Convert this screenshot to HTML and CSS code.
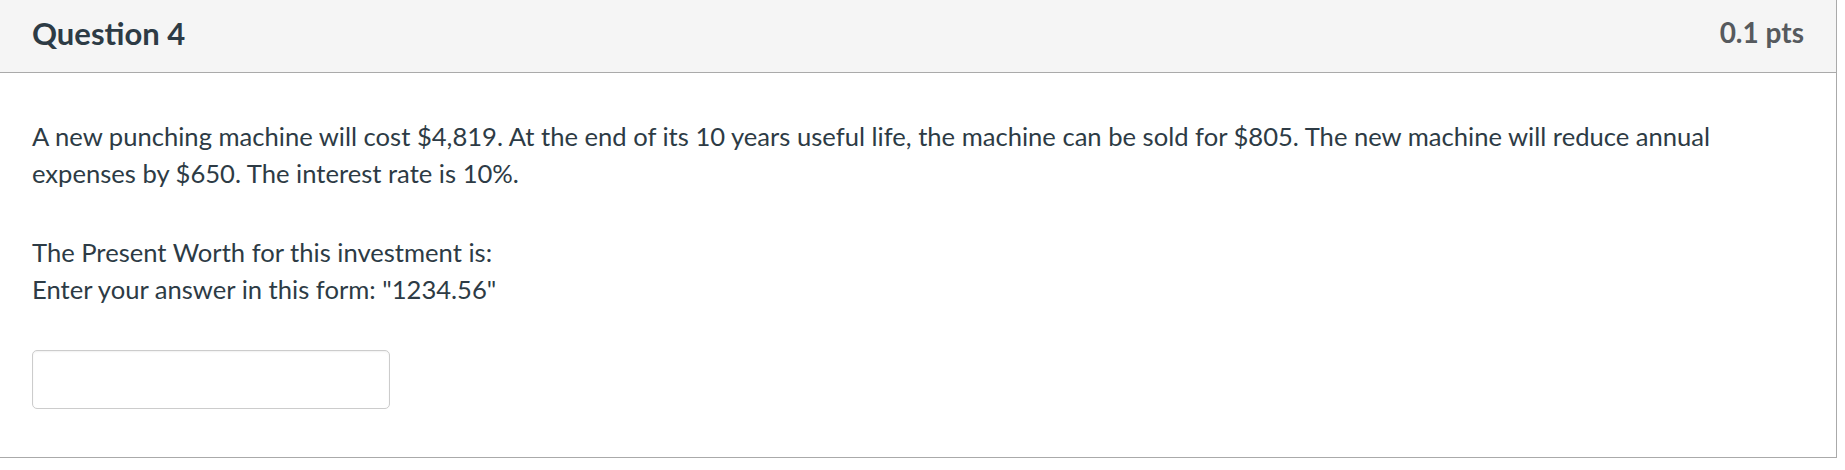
FILE: index.html
```html
<!DOCTYPE html>
<html lang="en">
<head>
<meta charset="utf-8">
<title>Question 4</title>
<link rel="stylesheet" href="styles.css">
</head>
<body>
<div class="question">
  <div class="question-header">
    <span class="question-name">Question 4</span>
    <span class="question-points">0.1 pts</span>
  </div>
  <div class="question-body">
    <p class="para">A new punching machine will cost $4,819. At the end of its 10 years useful life, the machine can be sold for $805. The new machine will reduce annual expenses by $650. The interest rate is 10%.</p>
    <p class="para">The Present Worth for this investment is:<br>Enter your answer in this form: "1234.56"</p>
    <input class="answer-input" type="text" aria-label="Answer">
  </div>
</div>
</body>
</html>
```

FILE: styles.css
```css
html, body {
  margin: 0;
  padding: 0;
  background: #ffffff;
}

body {
  font-family: Lato, "Noto Sans", "Liberation Sans", sans-serif;
  color: #2d3b45;
}

.question {
  box-sizing: border-box;
  width: 1838px;
  margin: -1px 0 0 -1px;
  border: 1px solid #aaaaaa;
  background: #ffffff;
}

.question-header {
  box-sizing: border-box;
  height: 73px;
  display: flex;
  justify-content: space-between;
  align-items: flex-start;
  padding: 14px 32px 0 32px;
  background: #f5f5f5;
  border-bottom: 1px solid #aaaaaa;
}

.question-name {
  font-size: 31px;
  line-height: 39px;
  font-weight: 700;
  color: #2d3b45;
}

.question-points {
  margin-top: 1px;
  font-size: 28px;
  line-height: 34px;
  font-weight: 700;
  color: #565a5e;
}

.question-body {
  padding: 45px 32px 48px 32px;
}

.para {
  margin: 0 0 42px 0;
  font-size: 25.6px;
  line-height: 37px;
}

.para + .para {
  margin-bottom: 42px;
}

.answer-input {
  display: block;
  box-sizing: border-box;
  width: 358px;
  height: 59px;
  margin: 0;
  padding: 0 12px;
  border: 1px solid #cccccc;
  border-radius: 5px;
  box-shadow: inset 0 1px 2px rgba(0, 0, 0, 0.06);
  background: #ffffff;
  font-family: inherit;
  font-size: 25px;
  outline: none;
}
```
